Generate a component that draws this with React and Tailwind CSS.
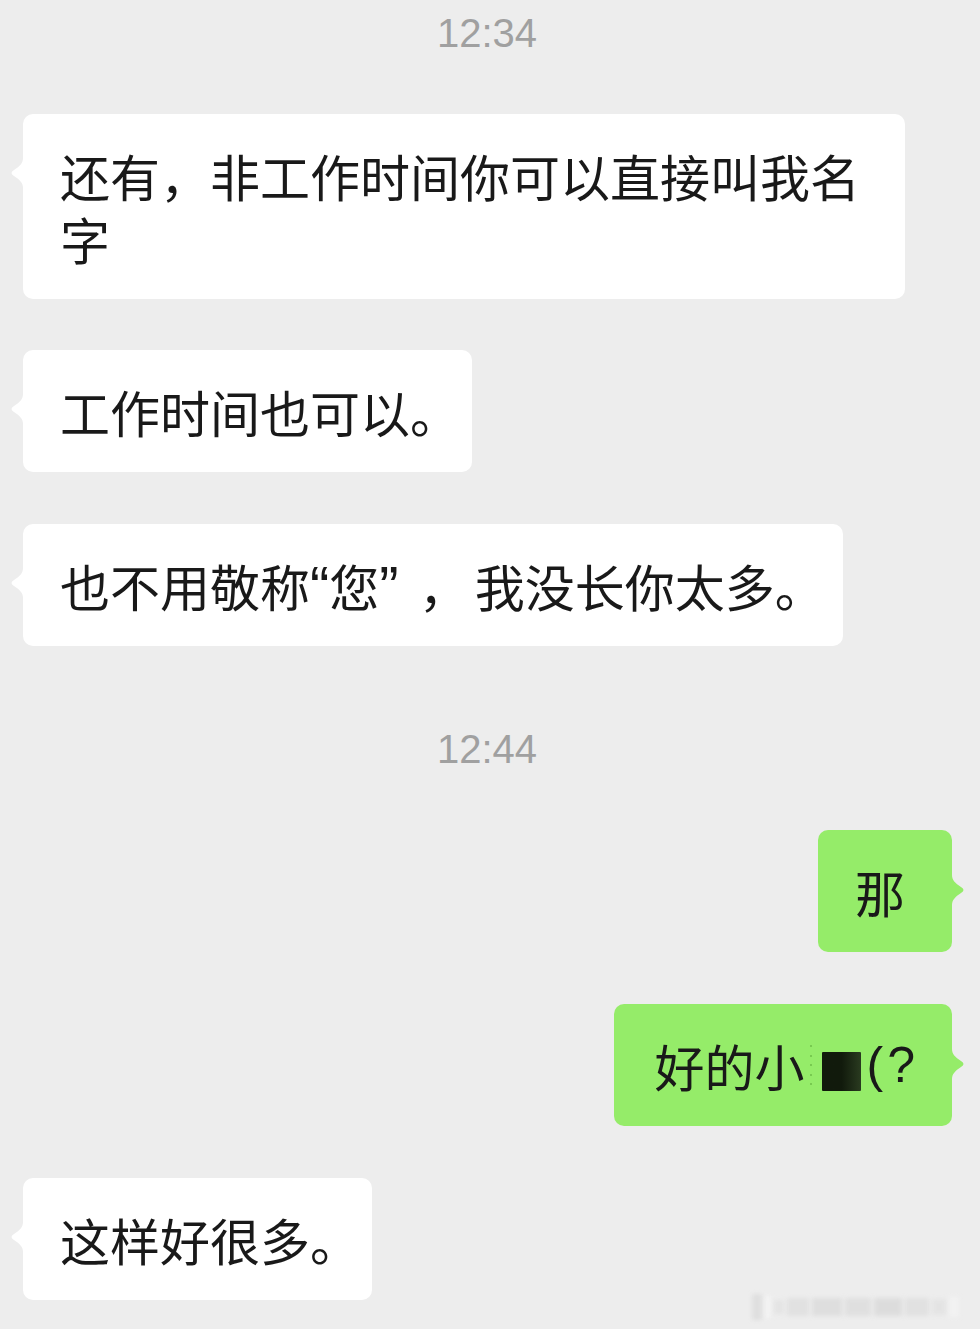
const cjk = { fontFamily: '"Noto Sans CJK SC", "Noto Sans", sans-serif' };
const latin = { fontFamily: '"Liberation Sans", Arial, sans-serif' };

const TailLeft = () => (
  <svg className="absolute -left-[16px] top-[44px]" width="17" height="30" viewBox="0 0 17 30">
    <path d="M17 0 L16 0 C16 5 13 8 7 12 Q2 15 7 18 C13 22 16 25 16 30 L17 30 Z" fill="#ffffff" />
  </svg>
);

const TailRight = () => (
  <svg className="absolute -right-[16px] top-[45px]" width="17" height="30" viewBox="0 0 17 30">
    <path d="M0 0 L1 0 C1 5 4 8 10 12 Q15 15 10 18 C4 22 1 25 1 30 L0 30 Z" fill="#95ec69" />
  </svg>
);

// iOS trims the width of trailing punctuation
const Trail = ({ children }) => <span className="tracking-[-25px]">{children}</span>;

const Left = ({ children, className = "", pad = "px-[37px]" }) => (
  <div className={`flex pl-[23px] ${className}`}>
    <div className={`relative max-w-[882px] rounded-[10px] bg-white ${pad} py-[29.5px] text-[50px] leading-[63px] text-[#191919]`}>
      <TailLeft />
      {children}
    </div>
  </div>
);

const Right = ({ children, className = "", pad = "px-[37px]" }) => (
  <div className={`flex justify-end pr-[28px] ${className}`}>
    <div className={`relative rounded-[10px] bg-[#95ec69] ${pad} py-[29.5px] text-[50px] leading-[63px] text-[#191919]`}>
      <TailRight />
      {children}
    </div>
  </div>
);

const Time = ({ children, className = "" }) => (
  <div className={`h-[40px] pr-[6px] text-center text-[40px] leading-[40px] text-[#a0a0a0] ${className}`} style={latin}>
    {children}
  </div>
);

export default function App() {
  return (
    <div className="relative min-h-[1329px] w-full overflow-hidden bg-[#ededed]" style={cjk}>
      <Time className="mt-[13px]">12:34</Time>

      <Left className="mt-[61px]">还有，非工作时间你可以直接叫我名字</Left>
      <Left className="mt-[51px]">
        工作时间也可以<Trail>。</Trail>
      </Left>
      <Left className="mt-[52px]" pad="pl-[37px] pr-[43px]">
        也不用敬称
        <span className="text-[58px] leading-none" style={latin}>“</span>
        您
        <span className="mr-[20px] text-[58px] leading-none" style={latin}>”</span>
        <span className="mr-[6px]">，</span>
        我没长你太多<Trail>。</Trail>
      </Left>

      <Time className="mt-[83px]">12:44</Time>

      <Right className="mt-[61px]" pad="pl-[37px] pr-[47px]">那</Right>
      <Right className="mt-[52px]" pad="pl-[41px] pr-[37px]">
        <span className="flex items-center">
          <span>好的小</span>
          <span className="ml-[5px] mr-[10px] flex h-[44px] flex-col justify-between py-[2px]">
            {[0, 1, 2, 3, 4].map((i) => (
              <span key={i} className="h-[2px] w-[2px] rounded-full bg-[#6fbf48]" />
            ))}
          </span>
          <span className="mt-[12px] h-[39px] w-[39px] rounded-[1px] bg-gradient-to-r from-[#111a0c] via-[#111a0c] to-[#2a3b20]" />
          <span className="ml-[6px]" style={latin}>
            <span className="tracking-[4px]">(</span>?
          </span>
        </span>
      </Right>

      <Left className="mt-[52px]">
        这样好很多<Trail>。</Trail>
      </Left>

      {/* blurred watermark */}
      <div className="absolute bottom-[9px] right-[12px] flex h-[26px] w-[216px] items-center gap-[3px] opacity-70 blur-[2px]">
        <span className="h-[26px] w-[10px] bg-[#d9d9d9]" />
        <span className="h-[22px] w-[6px] bg-[#f6f6f6]" />
        <span className="h-[14px] w-[10px] bg-[#e0e0e0]" />
        <span className="h-[18px] w-[22px] bg-[#dcdcdc]" />
        <span className="h-[18px] w-[30px] bg-[#d8d8d8]" />
        <span className="h-[18px] w-[26px] bg-[#dadada]" />
        <span className="h-[18px] w-[28px] bg-[#d6d6d6]" />
        <span className="h-[18px] w-[24px] bg-[#dcdcdc]" />
        <span className="h-[16px] w-[14px] bg-[#e0e0e0]" />
        <span className="h-[20px] w-[10px] bg-[#f4f4f4]" />
      </div>
    </div>
  );
}
